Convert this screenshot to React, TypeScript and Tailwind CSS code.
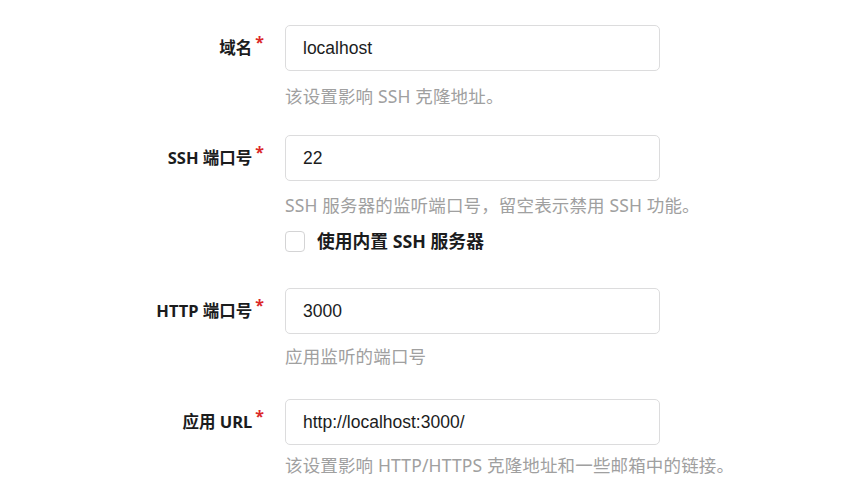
import type { ReactNode } from "react";

const latin = "font-['Noto_Sans','Noto_Sans_CJK_SC',sans-serif]";

function Field({
  label,
  value,
  help,
  helpGap,
  children,
}: {
  label: string;
  value: string;
  help: string;
  helpGap: string;
  children?: ReactNode;
}) {
  return (
    <div className="flex">
      <div className="flex h-[46px] w-[285px] shrink-0 items-center justify-end pr-[21px]">
        <span className={`${latin} text-[16.5px] font-bold text-[#1b1c1d]`}>{label}</span>
        <span className="relative -top-[6px] ml-[3px] text-[16px] font-bold leading-none text-[#db2828]">*</span>
      </div>
      <div className="flex flex-col">
        <input
          readOnly
          value={value}
          className="h-[46px] w-[375px] rounded-[5px] border border-[#dcdcdd] bg-white px-[17px] font-['Liberation_Sans',Arial,sans-serif] text-[17.5px] text-[#1b1c1d] outline-none"
        />
        <p className={`${helpGap} ${latin} text-[17.5px] tracking-[0.15px] leading-[24px] text-[#a0a0a0]`}>{help}</p>
        {children}
      </div>
    </div>
  );
}

export default function App() {
  return (
    <div className="h-[494px] w-[859px] overflow-hidden bg-white pt-[25px]">
      <Field label="域名" value="localhost" help="该设置影响 SSH 克隆地址。" helpGap="mt-[13px]" />

      <div className="mt-[27px]">
        <Field
          label="SSH 端口号"
          value="22"
          help="SSH 服务器的监听端口号，留空表示禁用 SSH 功能。"
          helpGap="mt-[12px]"
        >
          <label className="mt-[12px] flex h-[24px] items-center gap-[12px]">
            <span className="h-[21px] w-[20px] rounded-[4px] border border-[#d4d4d5] bg-white" />
            <span className={`${latin} text-[17.8px] font-bold text-[#1b1c1d]`}>使用内置 SSH 服务器</span>
          </label>
        </Field>
      </div>

      <div className="mt-[35px]">
        <Field label="HTTP 端口号" value="3000" help="应用监听的端口号" helpGap="mt-[10px]" />
      </div>

      <div className="mt-[31px]">
        <Field
          label="应用 URL"
          value="http://localhost:3000/"
          help="该设置影响 HTTP/HTTPS 克隆地址和一些邮箱中的链接。"
          helpGap="mt-[8px]"
        />
      </div>
    </div>
  );
}
